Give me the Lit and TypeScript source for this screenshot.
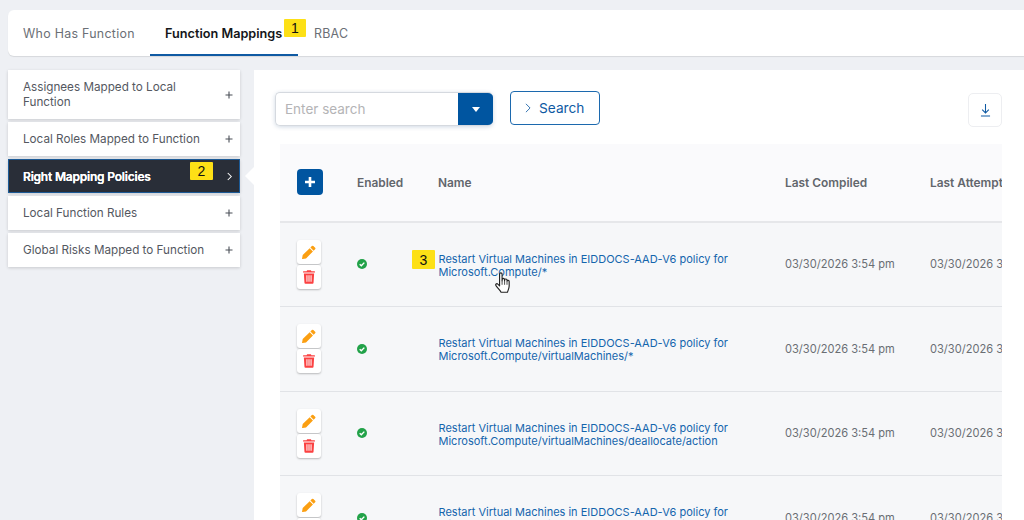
import { LitElement, html, css, svg } from "lit";
import { customElement } from "lit/decorators.js";

const pencil = html`<svg viewBox="0 0 16 16" width="14" height="14"><path fill="#fb9f12" d="M11.3 1.2a1.2 1.2 0 0 1 1.7 0l2 2a1.2 1.2 0 0 1 0 1.7l-1.7 1.7-3.700-3.700zM8.800 3.700l3.700 3.700-7.900 7.900-3.900.7a.5.5 0 0 1-.6-.6l.7-3.900z"/></svg>`;
const trash = html`<svg viewBox="0 0 14 16" width="12" height="14"><path fill="#fb4141" fill-rule="evenodd" d="M4.800 0h4.400l.6 1.300H13.300a.7.7 0 0 1 .7.700v.7H0V2a.7.7 0 0 1 .7-.7h3.500zM1 3.800h12l-.7 11a1.200 1.200 0 0 1-1.200 1.200H2.900a1.200 1.200 0 0 1-1.200-1.200zM4 6v7.600h1.200V6zm2.400 0v7.600h1.200V6zm2.400 0v7.600H10V6z"/></svg>`;
const check = html`<svg viewBox="0 0 16 16" width="10" height="10"><circle cx="8" cy="8" r="8" fill="#22a249"/><path d="M4.300 8.300l2.600 2.500 4.800-5" fill="none" stroke="#fff" stroke-width="2.300"/></svg>`;
const plus = html`<svg viewBox="0 0 8 8" width="8" height="8"><path d="M4 .5v7M.5 4h7" stroke="#4a4f57" stroke-width="1.100"/></svg>`;
const chev = html`<svg viewBox="0 0 8 10" width="7" height="9"><path d="M2 1l4 4-4 4" fill="none" stroke="#fff" stroke-width="1.200"/></svg>`;
const hand = svg`<path fill="#fff" stroke="#222" stroke-width="1" stroke-linejoin="round" d="M5 1.500c0-1.300 2.200-1.300 2.200 0v6l.1-1.200c0-1.200 2-1.200 2 0l.1 1.200.1-.8c0-1.200 2-1 2 .2l.1.900c.2-1 1.800-.8 1.800.4v3.800c0 2-1 4-1.500 5.500H6.300C5.500 16 3.800 14.500 2 12c-1-1.500.5-2.600 1.500-1.500L5 12z"/><path d="M7.200 7.500v3.500M9.400 7.500v3.500M11.500 8v3" stroke="#222" stroke-width=".7" fill="none"/>`;

const side = [
  "Assignees Mapped to Local Function",
  "Local Roles Mapped to Function",
  "Right Mapping Policies",
  "Local Function Rules",
  "Global Risks Mapped to Function",
];
const rows = [
  ["Restart Virtual Machines in EIDDOCS-AAD-V6 policy for", "Microsoft.Compute/*"],
  ["Restart Virtual Machines in EIDDOCS-AAD-V6 policy for", "Microsoft.Compute/virtualMachines/*"],
  ["Restart Virtual Machines in EIDDOCS-AAD-V6 policy for", "Microsoft.Compute/virtualMachines/deallocate/action"],
  ["Restart Virtual Machines in EIDDOCS-AAD-V6 policy for", "Microsoft.Compute/virtualMachines/restart/action"],
];

@customElement("app-root")
export class AppRoot extends LitElement {
  static styles = css`
    :host {
      display: block;
      width: 1024px;
      height: 520px;
      overflow: hidden;
      position: relative;
      background: #eef0f4;
      font-family: Inter, "Noto Sans", sans-serif;
      color: #4f535a;
    }
    .tabs {
      margin: 10px 0 0 8px;
      height: 46px;
      box-sizing: border-box;
      background: #fff;
      border-radius: 6px 0 0 6px;
      box-shadow: 0 1px 1px rgba(0, 0, 0, 0.1);
      display: flex;
    }
    .tab {
      padding: 0 15px;
      display: flex;
      align-items: center;
      height: 46px;
      box-sizing: border-box;
      font-size: 12.4px;
      letter-spacing: 0.25px;
      color: #6b6f76;
      white-space: nowrap;
    }
    .tab.who { width: 142px; letter-spacing: 0.3px; }
    .tab.on {
      width: 148px;
      font-size: 12.700px;
      font-weight: 600;
      color: #14161a;
      border-bottom: 2px solid #0f5aa3;
      padding-top: 2px;
      letter-spacing: 0;
    }
    .tab.rb { padding-left: 16px; }
    .body {
      display: flex;
      margin-top: 14px;
      padding-left: 8px;
      gap: 14px;
      height: 450px;
    }
    .side {
      width: 232px;
      display: flex;
      flex-direction: column;
      gap: 3px;
      flex: none;
    }
    .item {
      background: #fff;
      box-shadow: 0 1px 3px rgba(0, 0, 0, 0.16);
      min-height: 34px;
      box-sizing: border-box;
      padding: 9px 7px 9px 15px;
      display: flex;
      align-items: center;
      justify-content: space-between;
      font-size: 11.700px;
      line-height: 15px;
      color: #54585f;
    }
    .item.two { min-height: 49px; padding: 10px 7px 9px 15px; }
    .item .t { width: 186px; }
    .item.on {
      background: #292e38;
      color: #fff;
      font-weight: 600;
      border: 1px solid #1c5a96;
      padding: 8px 6px 8px 14px;
      font-size: 12px;
      letter-spacing: -0.2px;
      text-shadow: 0 0 0.6px #fff;
    }
    .item svg { flex: none; }
    .panel {
      position: relative;
      flex: 1;
      background: #fff;
      padding: 21px 22px 0 21px;
      min-width: 0;
    }
    .notch {
      position: absolute;
      left: -9px;
      top: 97px;
      width: 0;
      height: 0;
      border-top: 9px solid transparent;
      border-bottom: 9px solid transparent;
      border-right: 9px solid #fff;
    }
    .tools {
      display: flex;
      align-items: flex-start;
      height: 53px;
    }
    .input {
      margin-top: 1px;
      width: 218px;
      height: 34px;
      box-sizing: border-box;
      display: flex;
      border: 1px solid #d5d9df;
      border-right: none;
      border-radius: 5px;
      box-shadow: 0 1px 4px rgba(40, 80, 130, 0.22);
      overflow: hidden;
    }
    .ph {
      flex: 1;
      padding-left: 9px;
      font-size: 13.500px;
      color: #b4b4b6;
      display: flex;
      align-items: center;
    }
    .drop {
      width: 35px;
      background: #0055a0;
      display: flex;
      align-items: center;
      justify-content: center;
    }
    .tri {
      width: 0;
      height: 0;
      border-left: 4.500px solid transparent;
      border-right: 4.500px solid transparent;
      border-top: 5.500px solid #fff;
    }
    .btn {
      margin-left: 17px;
      width: 90px;
      height: 34px;
      box-sizing: border-box;
      border: 1px solid #1c69ae;
      border-radius: 4px;
      color: #0f5aa3;
      font-size: 13.700px;
      display: flex;
      align-items: center;
      gap: 8px;
      padding-left: 14px;
    }
    .dl {
      margin-left: auto;
      margin-top: 2px;
      width: 34px;
      height: 34px;
      box-sizing: border-box;
      border: 1px solid #edeef1;
      border-radius: 5px;
      display: flex;
      align-items: center;
      justify-content: center;
    }
    .table {
      margin-left: 5px;
      overflow: hidden;
    }
    .row {
      display: grid;
      grid-template-columns: 60px 81px 347px 145px 200px;
      padding-left: 17px;
      width: 850px;
      align-items: center;
      background: #f6f7f9;
      height: 84.500px;
      box-sizing: border-box;
      border-bottom: 1px solid #e1e3e7;
      font-size: 11.100px;
      color: #6a6e74;
    }
    .row.head {
      background: #fafafc;
      height: 78.500px;
      border-bottom: 2px solid #e6e7ea;
      font-weight: 600;
      font-size: 11.900px;
      color: #62666c;
    }
    .add {
      width: 26px;
      height: 26px;
      background: #0055a0;
      border-radius: 4px;
      display: flex;
      align-items: center;
      justify-content: center;
    }
    .acts {
      display: flex;
      flex-direction: column;
      gap: 1px;
      width: 24px;
    }
    .act {
      width: 24px;
      height: 24px;
      background: #fff;
      border-radius: 3px;
      box-shadow: 0 1px 2px rgba(0, 0, 0, 0.25);
      display: flex;
      align-items: center;
      justify-content: center;
    }
    .ok { display: flex; }
    .link {
      color: #1465ad;
      font-size: 11px;
      line-height: 13px;
      white-space: nowrap;
      padding-left: 0.5px;
      margin-top: 3px;
    }
    .badge {
      position: absolute;
      background: #fde016;
      color: #111;
      font-size: 14px;
      display: flex;
      align-items: center;
      justify-content: center;
      border-radius: 1px;
      font-family: "Liberation Sans", sans-serif;
    }
    .b1 { left: 284px; top: 19px; width: 22px; height: 18px; }
    .b2 { left: 190px; top: 162px; width: 23px; height: 18px; }
    .b3 { left: 412px; top: 250px; width: 23px; height: 19px; }
    .cursor { position: absolute; left: 495px; top: 272px; }
  `;

  render() {
    return html`
      <div class="tabs">
        <div class="tab who">Who Has Function</div>
        <div class="tab on">Function Mappings</div>
        <div class="tab rb">RBAC</div>
      </div>
      <div class="body">
        <div class="side">
          ${side.map(
            (s, i) => html`<div class="item ${i === 0 ? "two" : ""} ${i === 2 ? "on" : ""}">
              <span class="t">${s}</span>${i === 2 ? chev : plus}
            </div>`
          )}
        </div>
        <div class="panel">
          <div class="notch"></div>
          <div class="tools">
            <div class="input">
              <div class="ph">Enter search</div>
              <div class="drop"><div class="tri"></div></div>
            </div>
            <div class="btn">
              <svg viewBox="0 0 7 12" width="6" height="10"><path d="M1 1l5 5-5 5" fill="none" stroke="#0f5aa3" stroke-width="1"/></svg>
              Search
            </div>
            <div class="dl">
              <svg viewBox="0 0 12 16" width="11" height="14"><path d="M6 1v10M2.200 7.500L6 11.300 9.800 7.500M.8 14.800h10.400" fill="none" stroke="#0f5aa3" stroke-width="1.200"/></svg>
            </div>
          </div>
          <div class="table">
            <div class="row head">
              <div class="add">
                <svg viewBox="0 0 10 10" width="10" height="10"><path d="M5 0v10M0 5h10" stroke="#fff" stroke-width="2.600"/></svg>
              </div>
              <div>Enabled</div>
              <div>Name</div>
              <div>Last Compiled</div>
              <div>Last Attempted</div>
            </div>
            ${rows.map(
              (r) => html`<div class="row">
                <div class="acts">
                  <div class="act">${pencil}</div>
                  <div class="act">${trash}</div>
                </div>
                <div class="ok">${check}</div>
                <div class="link">${r[0]}<br />${r[1]}</div>
                <div>03/30/2026 3:54 pm</div>
                <div>03/30/2026 3:54 pm</div>
              </div>`
            )}
          </div>
        </div>
      </div>
      <div class="badge b1">1</div>
      <div class="badge b2">2</div>
      <div class="badge b3">3</div>
      <svg class="cursor" width="16" height="21" viewBox="1 0 14 18">${hand}</svg>
    `;
  }
}
